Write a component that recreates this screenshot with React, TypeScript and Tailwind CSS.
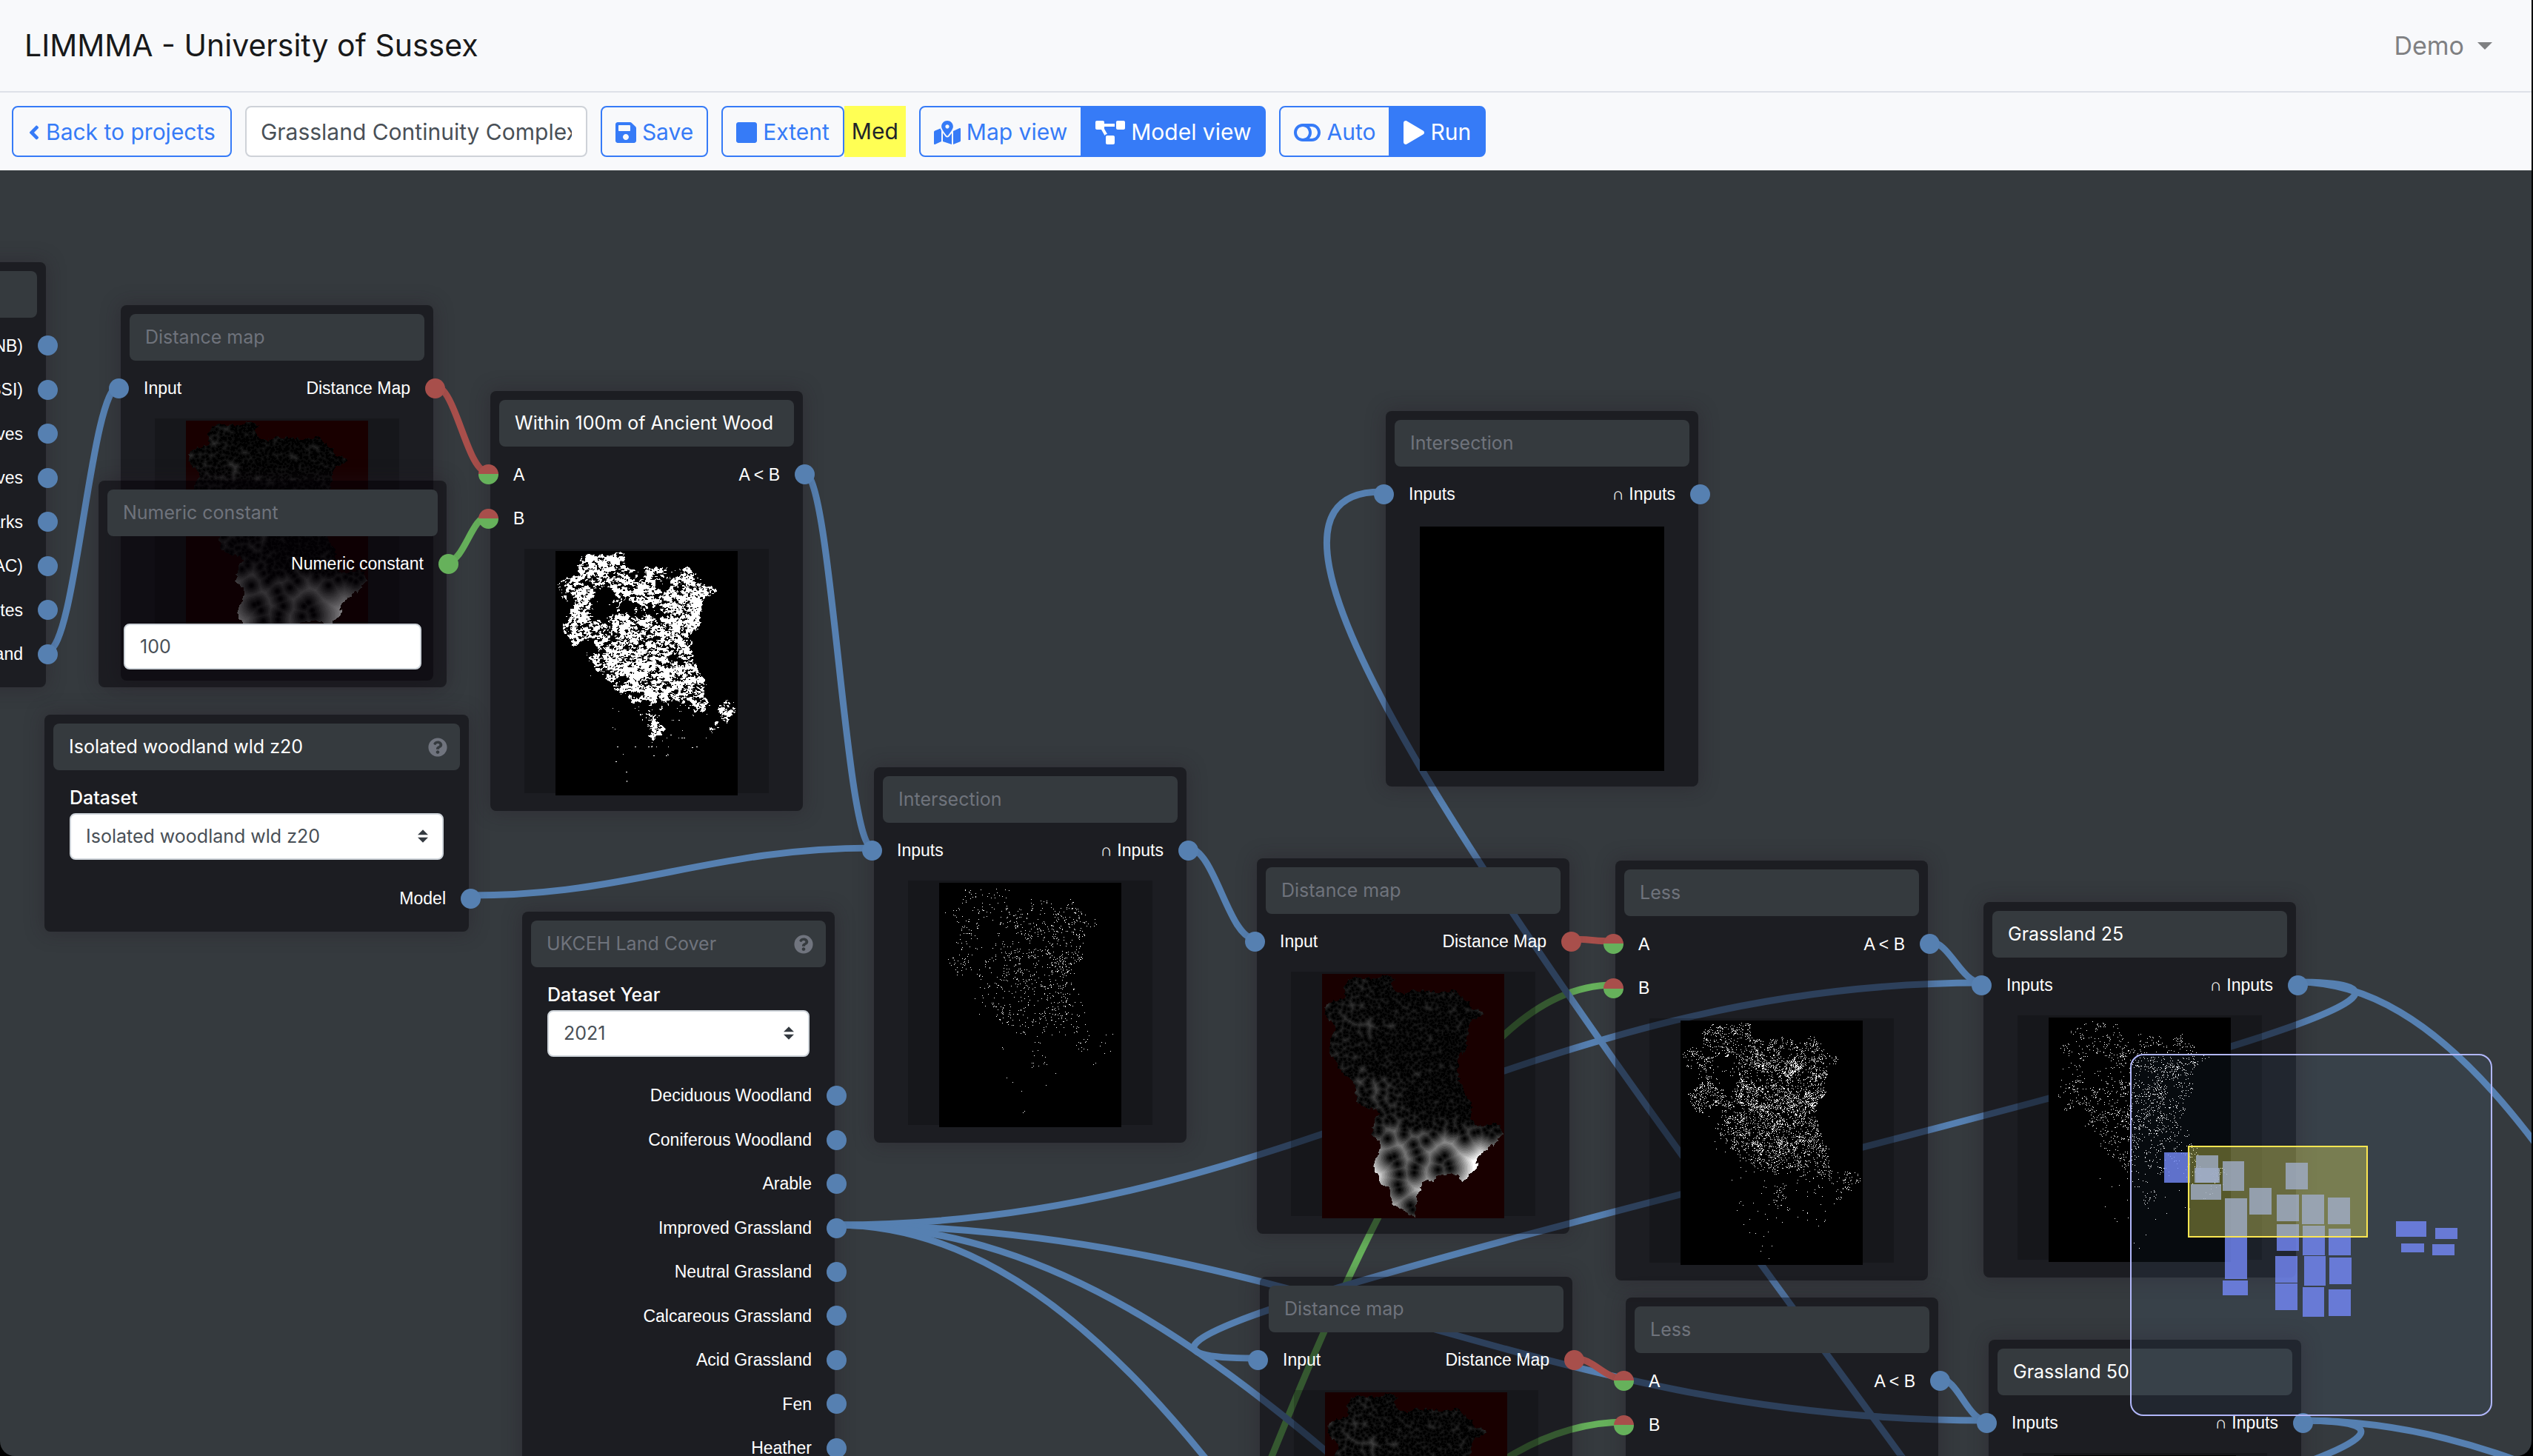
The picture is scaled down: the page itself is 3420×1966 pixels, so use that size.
import React from "react";
import {
  FaAngleLeft,
  FaSave,
  FaSquare,
  FaMapMarkedAlt,
  FaProjectDiagram,
  FaToggleOff,
  FaPlay,
  FaQuestionCircle,
} from "react-icons/fa";

/* ---------- raster previews ---------- */

const W = 246;
const H = 330;

// District boundary, in preview pixels.
const BOUNDARY: [number, number][] = [
  [35, 7], [54, 5], [70, 7], [86, 1], [99, 7], [94, 12], [99, 24], [111, 26], [125, 22], [140, 23],
  [158, 25], [182, 22], [186, 31], [198, 36], [200, 49], [211, 48], [217, 55], [209, 60], [200, 61],
  [196, 88], [194, 104], [183, 112], [183, 135], [190, 154], [195, 167], [203, 175], [201, 193],
  [207, 205], [220, 205], [229, 202], [240, 205], [245, 217], [237, 226], [223, 235], [214, 244],
  [209, 248], [209, 262], [200, 271], [191, 280], [183, 273], [171, 271], [160, 272], [147, 280],
  [143, 278], [136, 282], [133, 293], [128, 301], [127, 314], [125, 329], [116, 324], [103, 316],
  [94, 311], [94, 301], [90, 286], [79, 283], [75, 272], [69, 261], [74, 246], [79, 240], [77, 226],
  [67, 219], [70, 201], [77, 188], [73, 183], [56, 180], [47, 172], [45, 151], [39, 141], [27, 134],
  [21, 122], [10, 109], [10, 91], [18, 72], [9, 62], [3, 49], [9, 40], [18, 36], [33, 31], [30, 17],
];

function rng(seed: number) {
  let s = seed >>> 0;
  return () => {
    s = (s + 0x6d2b79f5) >>> 0;
    let t = s;
    t = Math.imul(t ^ (t >>> 15), t | 1);
    t ^= t + Math.imul(t ^ (t >>> 7), t | 61);
    return ((t ^ (t >>> 14)) >>> 0) / 4294967296;
  };
}

function noiseField(seed: number) {
  const r = rng(seed);
  const n = 256;
  const v = Array.from({ length: n * n }, () => r());
  const at = (x: number, y: number) => v[(y & 255) * n + (x & 255)];
  return (x: number, y: number) => {
    const xi = Math.floor(x);
    const yi = Math.floor(y);
    const fx = x - xi;
    const fy = y - yi;
    const a = at(xi, yi) * (1 - fx) + at(xi + 1, yi) * fx;
    const b = at(xi, yi + 1) * (1 - fx) + at(xi + 1, yi + 1) * fx;
    return a * (1 - fy) + b * fy;
  };
}

const edgeNoise = noiseField(5);

function insideRaw(x: number, y: number) {
  let c = false;
  for (let i = 0, j = BOUNDARY.length - 1; i < BOUNDARY.length; j = i++) {
    const [xi, yi] = BOUNDARY[i];
    const [xj, yj] = BOUNDARY[j];
    if (yi > y !== yj > y && x < ((xj - xi) * (y - yi)) / (yj - yi) + xi) c = !c;
  }
  return c;
}

const MASK: boolean[] = [];
for (let y = 0; y < H; y++)
  for (let x = 0; x < W; x++)
    MASK.push(
      insideRaw(
        x + 0.5 + (edgeNoise(x / 3, y / 3) - 0.5) * 5,
        y + 0.5 + (edgeNoise(x / 3 + 90, y / 3) - 0.5) * 5,
      ),
    );

function runs(test: (x: number, y: number) => boolean) {
  let d = "";
  for (let y = 0; y < H; y++) {
    let start = -1;
    for (let x = 0; x <= W; x++) {
      const on = x < W && test(x, y);
      if (on && start < 0) start = x;
      if (!on && start >= 0) {
        d += `M${start} ${y}h${x - start}v1h${start - x}z`;
        start = -1;
      }
    }
  }
  return d;
}

// Clearings: x, y, radius x, radius y.
const CLEARINGS = [
  [66, 66, 14, 17], [64, 86, 12, 9], [98, 74, 12, 8], [144, 46, 7, 6], [133, 80, 9, 5], [38, 42, 8, 5],
  [110, 85, 10, 4], [20, 65, 6, 10], [42, 130, 10, 12], [75, 122, 6, 5], [211, 214, 7, 18],
  [8, 50, 4, 8], [12, 84, 6, 12], [110, 30, 9, 6], [160, 28, 9, 5],
];

function cover(px: number, py: number) {
  const x = px + (edgeNoise(px / 4 + 30, py / 4) - 0.5) * 12;
  const y = py + (edgeNoise(px / 4, py / 4 + 60) - 0.5) * 12;
  let k = 1;
  for (const [cx, cy, rx, ry] of CLEARINGS) {
    const q = ((x - cx) / rx) ** 2 + ((y - cy) / ry) ** 2;
    if (q < 1.6) k = Math.min(k, q < 1 ? 0.1 : 0.1 + (q - 1) * 1.5);
  }
  if (x < 46 && y > 128) k *= 0.15;
  const south = 203 - Math.max(0, 105 - x) * 0.9 + (x > 185 ? 14 : 0);
  if (y > south && x < 210) {
    const blob = ((x - 134) / 13) ** 2 + ((y - 241) / 12) ** 2;
    const stem = x > 112 && x < 145 && y < 232;
    k = blob < 1 ? 0.9 : stem ? 0.45 : Math.max(0.02, 0.3 - (y - south) / 60);
    if (x < 80) k *= 0.2;
  }
  if (x > 210 && y > 190) k *= 0.75;
  return k;
}

const n1 = noiseField(11);
const n2 = noiseField(23);
const WITHIN = runs((x, y) => {
  if (!MASK[y * W + x]) return false;
  const k = cover(x, y);
  const v = 0.36 * n1(x / 6, y / 4) + 0.34 * n2(x / 2.6, y / 2) + 0.3 * n1(x / 1.4 + 70, y / 1.2);
  return v < 0.2 + 0.34 * k;
});

function speckle(seed: number, density: number) {
  const r = rng(seed);
  const n = noiseField(seed + 100);
  return runs((x, y) => {
    const roll = r();
    if (!MASK[y * W + x]) return false;
    const cl = n(x / 9, y / 9) * n(x / 3 + 40, y / 3) * 3.4;
    const k = cover(x, y);
    const core = Math.exp(-(((x - 140) / 70) ** 2) - ((y - 100) / 70) ** 2);
    return roll < density * Math.max(0.06, k) * cl * (0.55 + core);
  });
}

const SPARSE = speckle(3, 0.05);
const DENSE = speckle(8, 0.19);
const MEDIUM = speckle(14, 0.075);

const LEVELS = 24;

const SOUTH_SITES: [number, number][] = [
  [229, 217], [236, 212], [222, 214], [159, 250], [170, 256], [165, 245], [156, 264], [172, 262], [119, 312],
  [122, 318], [102, 284], [104, 291], [97, 246], [92, 248], [123, 230], [127, 240], [125, 261], [124, 268],
  [140, 225], [104, 270], [101, 256], [88, 222], [110, 216], [205, 214], [150, 216], [192, 222], [131, 250],
];

function distanceMap(seed: number, gain: number, gaps: number[][]) {
  const r = rng(seed);
  const sites: [number, number][] = SOUTH_SITES.slice();
  let guard = 0;
  while (sites.length < 3200 && guard++ < 30000) {
    const x = r() * W;
    const y = r() * 214;
    if (y > 185 && r() < (y - 185) / 32) continue;
    if (gaps.some(([gx, gy, rx, ry]) => ((x - gx) / rx) ** 2 + ((y - gy) / ry) ** 2 < 1)) continue;
    if (x < 110 && y > 140 && r() < 0.75) continue;
    if (x < 60 && r() < 0.5) continue;
    sites.push([x, y]);
  }
  const out: number[] = [];
  for (let y = 0; y < H; y++)
    for (let x = 0; x < W; x++) {
      if (!MASK[y * W + x]) {
        out.push(-1);
        continue;
      }
      let best = 1e9;
      for (const [sx, sy] of sites) {
        const dy = sy - y;
        if (dy * dy >= best) continue;
        const dx = sx - x;
        const q = dx * dx + dy * dy;
        if (q < best) best = q;
      }
      const v = Math.min(1, (Math.sqrt(best) / 40) * gain);
      out.push(Math.min(LEVELS - 1, Math.floor(v * LEVELS)));
    }
  return Array.from({ length: LEVELS }, (_, l) => runs((x, y) => out[y * W + x] === l));
}

const DIST_A = distanceMap(41, 1, [
  [64, 68, 5, 18], [35, 46, 7, 5], [97, 78, 6, 5], [144, 48, 7, 5], [60, 56, 7, 5], [112, 84, 4, 4],
]);
const DIST_B = distanceMap(77, 1.2, [[64, 74, 5, 18], [36, 42, 5, 4], [92, 70, 8, 6], [144, 46, 6, 5]]);

type Raster = "distA" | "distB" | "within" | "sparse" | "dense" | "medium" | "blank";

function Preview({ kind }: { kind: Raster }) {
  if (kind === "blank") {
    return <div className="mx-auto mt-[11px] h-[330px] w-[330px] translate-y-[3px] bg-black" />;
  }
  const dist = kind === "distA" ? DIST_A : kind === "distB" ? DIST_B : null;
  const dots = kind === "within" ? WITHIN : kind === "sparse" ? SPARSE : kind === "dense" ? DENSE : MEDIUM;
  return (
    <div className="mx-auto mt-[11px] h-[330px] w-[330px] bg-black/20 pt-[3px]">
      <svg
        viewBox={`0 0 ${W} ${H}`}
        className={
          dist ? "mx-auto block h-[330px] w-[246px] bg-[#190000]" : "mx-auto block h-[330px] w-[246px] bg-black"
        }
        shapeRendering="crispEdges"
        aria-hidden="true"
      >
        {dist ? (
          dist.map((d, i) => {
            const g = Math.round((i / (LEVELS - 1)) * 255);
            return <path key={i} d={d} fill={`rgb(${g},${g},${g})`} />;
          })
        ) : (
          <path d={dots} fill="#fff" />
        )}
      </svg>
    </div>
  );
}

/* ---------- nodes ---------- */

type Kind = "blue" | "red" | "green" | "mixed";

const SOCKET: Record<Kind, string> = {
  blue: "bg-[#5680b1]",
  red: "bg-[#a84f4b]",
  green: "bg-[#66b15b]",
  mixed: "bg-[linear-gradient(#a84f4b_50%,#66b15b_50%)]",
};

function Socket({ kind, label }: { kind: Kind; label: string }) {
  return <button type="button" aria-label={label} className={`size-[27px] shrink-0 rounded-full ${SOCKET[kind]}`} />;
}

type Port = { label: string; kind: Kind };
type Row = { in?: Port; out?: Port };

type NodeDef = {
  id: string;
  x: number;
  y: number;
  w: number;
  placeholder: string;
  title?: string;
  help?: boolean;
  select?: { label: string; value: string };
  rows: Row[];
  value?: string;
  raster?: Raster;
};

const blueOut = (label: string): Row => ({ out: { label, kind: "blue" } });
const distRows: Row[] = [{ in: { label: "Input", kind: "blue" }, out: { label: "Distance Map", kind: "red" } }];
const intersectRows: Row[] = [{ in: { label: "Inputs", kind: "blue" }, out: { label: "∩ Inputs", kind: "blue" } }];
const lessRows: Row[] = [
  { in: { label: "A", kind: "mixed" }, out: { label: "A < B", kind: "blue" } },
  { in: { label: "B", kind: "mixed" } },
];

const NODES: NodeDef[] = [
  {
    id: "designations", x: -420, y: 124, w: 482, placeholder: "",
    rows: [
      "Areas of Outstanding Natural Beauty (AONB)",
      "Sites of Special Scientific Interest (SSSI)",
      "National Nature Reserves",
      "Local Nature Reserves",
      "National Parks",
      "Special Areas of Conservation (SAC)",
      "Ramsar Sites",
      "Ancient Woodland",
    ].map(blueOut),
  },
  { id: "dist1", x: 163, y: 182, w: 422, placeholder: "Distance map", rows: distRows, raster: "distA" },
  {
    id: "const", x: 133, y: 419, w: 470, placeholder: "Numeric constant", value: "100",
    rows: [{ out: { label: "Numeric constant", kind: "green" } }],
  },
  {
    id: "within", x: 662, y: 298, w: 422, placeholder: "Less", title: "Within 100m of Ancient Wood",
    rows: lessRows, raster: "within",
  },
  {
    id: "isolated", x: 60, y: 735, w: 573, placeholder: "Dataset", title: "Isolated woodland wld z20", help: true,
    select: { label: "Dataset", value: "Isolated woodland wld z20" }, rows: [blueOut("Model")],
  },
  {
    id: "landcover", x: 705, y: 1001, w: 422, placeholder: "UKCEH Land Cover", help: true,
    select: { label: "Dataset Year", value: "2021" },
    rows: [
      "Deciduous Woodland", "Coniferous Woodland", "Arable", "Improved Grassland", "Neutral Grassland",
      "Calcareous Grassland", "Acid Grassland", "Fen", "Heather",
    ].map(blueOut),
  },
  { id: "int1", x: 1180, y: 806, w: 422, placeholder: "Intersection", rows: intersectRows, raster: "sparse" },
  { id: "int2", x: 1871, y: 325, w: 422, placeholder: "Intersection", rows: intersectRows, raster: "blank" },
  { id: "dist2", x: 1697, y: 929, w: 422, placeholder: "Distance map", rows: distRows, raster: "distB" },
  { id: "less1", x: 2181, y: 932, w: 422, placeholder: "Less", rows: lessRows, raster: "dense" },
  { id: "g25", x: 2678, y: 988, w: 422, placeholder: "Intersection", title: "Grassland 25", rows: intersectRows, raster: "medium" },
  { id: "dist3", x: 1701, y: 1494, w: 422, placeholder: "Distance map", rows: distRows, raster: "distB" },
  { id: "less2", x: 2195, y: 1522, w: 422, placeholder: "Less", rows: lessRows, raster: "dense" },
  { id: "g50", x: 2685, y: 1579, w: 422, placeholder: "Intersection", title: "Grassland 50", rows: intersectRows, raster: "medium" },
];

const ROWS_HEIGHT: Record<number, string> = {
  1: "h-[59px]",
  2: "h-[119px]",
  8: "h-[476px]",
  9: "h-[535px]",
};

function GraphNode({ node }: { node: NodeDef }) {
  return (
    <section
      className={`absolute rounded-lg bg-[rgba(4,0,5,0.5)] pt-[12px] shadow-[0_0_24px_2px_rgba(36,26,36,0.35)] ${
        node.raster || node.value ? "pb-[24px]" : "pb-[15px]"
      }`}
      style={{ left: node.x, top: node.y, width: node.w }}
    >
      <div className="mx-[12px] flex h-[63px] items-center rounded-lg bg-[#353a3e]">
        <input
          aria-label="Node name"
          placeholder={node.placeholder}
          defaultValue={node.title}
          className="min-w-0 flex-1 bg-transparent pl-[21px] text-[25px] text-white outline-none placeholder:text-[#6f737c]"
        />
        {node.help && (
          <button type="button" aria-label="Help" className="mr-[17px] text-[26px] text-[#70747e]">
            <FaQuestionCircle />
          </button>
        )}
      </div>

      {node.select && (
        <div className="mx-[34px] mb-[23px] pt-[16px]">
          <label htmlFor={node.id} className="block h-[42px] text-[25px] leading-[42px] font-medium text-white">
            {node.select.label}
          </label>
          <div className="relative">
            <select
              id={node.id}
              className="h-[63px] w-full appearance-none rounded-lg border-2 border-[#ced4da] bg-white pl-[20px] text-[25px] text-[#495057]"
            >
              <option>{node.select.value}</option>
            </select>
            <svg
              viewBox="0 0 4 5"
              className="pointer-events-none absolute top-[22px] right-[21px] h-[18px] w-[14px] fill-[#343a40]"
              aria-hidden="true"
            >
              <path d="M2 0L0 2h4zm0 5L0 3h4z" />
            </svg>
          </div>
        </div>
      )}

      <div
        className={`mx-[-16px] mt-[8px] grid auto-rows-fr font-['Liberation_Sans',Arial,sans-serif] text-[23px] text-white ${ROWS_HEIGHT[node.rows.length]}`}
      >
        {node.rows.map((row, i) => (
          <div key={i} className="flex items-center gap-[20px]">
            {row.in && (
              <>
                <Socket kind={row.in.kind} label={`${row.in.label} socket`} />
                <span>{row.in.label}</span>
              </>
            )}
            {row.out && (
              <>
                <span className="ml-auto whitespace-nowrap">{row.out.label}</span>
                <Socket kind={row.out.kind} label={`${row.out.label} socket`} />
              </>
            )}
          </div>
        ))}
      </div>

      {node.value && (
        <input
          aria-label="Value"
          defaultValue={node.value}
          className="mx-[34px] mt-[51px] block h-[62px] w-[402px] rounded-lg border-2 border-[#ced4da] bg-white pl-[20px] text-[25px] text-[#495057]"
        />
      )}
      {node.raster && <Preview kind={node.raster} />}
    </section>
  );
}

/* ---------- links ---------- */

const BLUE = "#5680b1";
const RED = "#a84f4b";
const GREEN = "#66b15b";

const LINKS: [number, number, number, number, string][] = [
  [64, 649, 161, 291, BLUE],
  [587, 291, 659, 408, RED],
  [605, 528, 659, 467, GREEN],
  [1086, 408, 1178, 915, BLUE],
  [635, 979, 1178, 915, BLUE],
  [1604, 915, 1695, 1038, BLUE],
  [2121, 1038, 2178, 1041, RED],
  [1135, 2675, 2178, 1100, GREEN],
  [1135, 2675, 2195, 1690, GREEN],
  [1129, 1424, 2676, 1097, BLUE],
  [1129, 1424, 2682, 1688, BLUE],
  [1129, 1424, 2690, 2239, BLUE],
  [1129, 1424, 2680, 2841, BLUE],
  [2604, 1041, 2676, 1097, BLUE],
  [2618, 1631, 2682, 1688, BLUE],
  [3098, 1096, 1694, 1604, BLUE],
  [3102, 1096, 4082, 2040, BLUE],
  [3104, 1688, 1668, 2210, BLUE],
  [3108, 1688, 4082, 1970, BLUE],
  [3125, 2841, 1865, 434, BLUE],
  [2125, 1604, 2193, 1632, RED],
];

function Links() {
  return (
    <svg className="absolute inset-0 size-full" aria-hidden="true">
      {LINKS.map(([x1, y1, x2, y2, color], i) => {
        const h = Math.abs(x2 - x1) * 0.4;
        return (
          <path
            key={i}
            d={`M${x1} ${y1}C${x1 + h} ${y1} ${x2 - h} ${y2} ${x2} ${y2}`}
            fill="none"
            stroke={color}
            strokeWidth={9}
          />
        );
      })}
    </svg>
  );
}

/* ---------- minimap ---------- */

const MINI: [number, number, number, number][] = [
  [46, 133, 35, 41], [89, 137, 30, 37], [87, 154, 34, 20], [125, 145, 29, 40], [82, 176, 41, 21],
  [210, 147, 30, 36], [161, 181, 30, 36], [128, 195, 30, 109], [198, 190, 30, 36], [232, 190, 30, 40],
  [267, 194, 30, 36], [198, 230, 30, 36], [233, 232, 30, 40], [268, 236, 30, 36], [196, 273, 30, 36],
  [235, 273, 29, 40], [269, 275, 30, 36], [196, 310, 30, 36], [233, 315, 29, 40], [268, 318, 30, 36],
  [125, 306, 34, 20], [359, 226, 41, 21], [412, 235, 30, 15], [366, 256, 31, 12], [408, 257, 30, 15],
];

function Minimap() {
  return (
    <div className="absolute right-[53px] bottom-[54px] overflow-hidden rounded-[18px] border-2 border-[#b1b7fa] bg-[rgba(120,190,255,0.06)]">
      <svg viewBox="2 2 485 485" className="block size-[485px]" aria-label="Minimap" role="img">
        {MINI.map(([x, y, w, h], i) => (
          <rect key={i} x={x} y={y} width={w} height={h} fill="rgba(115,135,245,0.82)" />
        ))}
        <rect x={79} y={125} width={241} height={122} fill="rgba(255,251,100,0.32)" stroke="#fbe651" strokeWidth={2} />
      </svg>
    </div>
  );
}

/* ---------- page ---------- */

const BTN = "flex items-center gap-[8px] border-2 border-[#367bf7] pt-[2px] whitespace-nowrap";
const OUTLINE = "bg-[#f8f9fb] text-[#367bf7]";
const SOLID = "bg-[#367bf7] text-white";

export default function App() {
  return (
    <div className="h-screen bg-black font-[Inter,sans-serif]">
      <div className="mr-[2px] flex h-full flex-col overflow-hidden rounded-b-[20px] bg-[#353a3e]">
        <header className="flex h-[125px] items-center justify-between border-b-2 border-[#dee1e8] bg-[#f8f9fb] pr-[53px] pl-[33px]">
          <a href="#home" className="text-[41px] text-[#18191a]">
            LIMMMA - University of Sussex
          </a>
          <button type="button" className="flex items-center gap-[18px] text-[34px] text-[#7f8082]">
            Demo
            <span className="border-x-[10px] border-t-[10px] border-x-transparent border-t-[#7f8082]" />
          </button>
        </header>

        <nav className="flex h-[105px] items-stretch gap-[18px] bg-[#f8f9fb] px-[16px] py-[18px] text-[30px]">
          <button type="button" className={`${BTN} ${OUTLINE} rounded-lg px-[20px]`}>
            <FaAngleLeft className="w-[16px]" />
            Back to projects
          </button>
          <input
            aria-label="Project name"
            defaultValue="Grassland Continuity Complexity"
            className="w-[462px] rounded-lg border-2 border-[#ced2d8] bg-white px-[19px] pt-[2px] text-[#495057]"
          />
          <button type="button" className={`${BTN} ${OUTLINE} rounded-lg px-[18px]`}>
            <FaSave className="w-[28px]" size={32} />
            Save
          </button>
          <div className="flex">
            <button type="button" className={`${BTN} ${OUTLINE} rounded-lg px-[18px]`}>
              <FaSquare className="w-[28px]" size={32} />
              Extent
            </button>
            <span className="flex items-center bg-[#ffff54] px-[10px] text-[#212529]">Med</span>
          </div>
          <div className="flex">
            <button type="button" className={`${BTN} ${OUTLINE} rounded-l-lg px-[18px]`}>
              <FaMapMarkedAlt className="w-[36px]" size={32} />
              Map view
            </button>
            <button type="button" className={`${BTN} ${SOLID} -ml-[2px] rounded-r-lg px-[18px]`}>
              <FaProjectDiagram className="w-[40px]" size={32} />
              Model view
            </button>
          </div>
          <div className="flex">
            <button type="button" className={`${BTN} ${OUTLINE} rounded-l-lg px-[18px]`}>
              <FaToggleOff className="w-[36px]" size={32} />
              Auto
            </button>
            <button type="button" className={`${BTN} ${SOLID} -ml-[2px] rounded-r-lg px-[18px]`}>
              <FaPlay className="w-[28px]" size={32} />
              Run
            </button>
          </div>
        </nav>

        <main className="relative min-h-0 flex-1 overflow-hidden">
          <Links />
          {NODES.map((n) => (
            <GraphNode key={n.id} node={n} />
          ))}
          <Minimap />
        </main>
      </div>
    </div>
  );
}
